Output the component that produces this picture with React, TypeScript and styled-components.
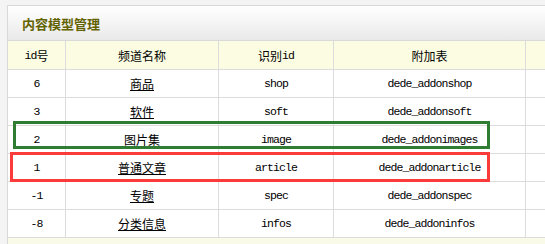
import styled, {createGlobalStyle} from 'styled-components'

const GlobalStyle = createGlobalStyle`
  html, body {
    margin: 0;
    padding: 0;
    background: #f4f4f4;
    overflow: hidden;
  }
`

type Model = {id: string; name: string; nid: string; table: string}

const models: Model[] = [
  {id: '6', name: '商品', nid: 'shop', table: 'dede_addonshop'},
  {id: '3', name: '软件', nid: 'soft', table: 'dede_addonsoft'},
  {id: '2', name: '图片集', nid: 'image', table: 'dede_addonimages'},
  {id: '1', name: '普通文章', nid: 'article', table: 'dede_addonarticle'},
  {id: '-1', name: '专题', nid: 'spec', table: 'dede_addonspec'},
  {id: '-8', name: '分类信息', nid: 'infos', table: 'dede_addoninfos'},
]

const App = () => {
  return (
    <Page>
      <GlobalStyle />
      <Panel>
        <TitleBar>
          <Title>内容模型管理</Title>
        </TitleBar>
        <Grid>
          <HeadCell><Mono>id</Mono>号</HeadCell>
          <HeadCell>频道名称</HeadCell>
          <HeadCell>识别<Mono>id</Mono></HeadCell>
          <HeadCell>附加表</HeadCell>
          <HeadCell />
          {models.map((m) => (
            <Row key={m.id}>
              <Cell mono>{m.id}</Cell>
              <Cell><NameLink href="#">{m.name}</NameLink></Cell>
              <Cell mono>{m.nid}</Cell>
              <Cell mono>{m.table}</Cell>
              <Cell />
            </Row>
          ))}
        </Grid>
        <Footer />
      </Panel>
      <Mark color="#2f7d32" x={13} y={121} w={477} h={28} />
      <Mark color="#fb3a3a" x={10} y={152} w={480} h={30} />
    </Page>
  )
}

export default App

const Page = styled.div`
  position: relative;
  width: 545px;
  height: 244px;
  padding: 5px 0 0 7px;
  box-sizing: border-box;
  overflow: hidden;
`

const Panel = styled.div`
  width: 600px;
  border: 1px solid #d9d9d9;
  background: #fff;
`

const TitleBar = styled.div`
  height: 34px;
  display: flex;
  align-items: center;
  padding-left: 14px;
  background: linear-gradient(#ffffff, #e9e9e9);
  border-bottom: 1px solid #d9d9d9;
`

const Title = styled.div`
  font-family: "Noto Sans CJK SC", sans-serif;
  font-size: 13px;
  font-weight: bold;
  color: #626200;
`

const Grid = styled.div`
  display: grid;
  grid-template-columns: 57px 152px 114px 191px 1fr;
  grid-template-rows: 28px;
  grid-auto-rows: 27px;
  gap: 1px;
  background: #dcdcdc;
  border-bottom: 1px solid #dcdcdc;
`

const Row = styled.div`
  display: contents;
`

const HeadCell = styled.div`
  background: #fbfce2;
  display: flex;
  align-items: center;
  justify-content: center;
  font-family: "Noto Sans CJK SC", sans-serif;
  font-size: 12px;
  color: #000;
`

const Cell = styled.div<{mono?: boolean}>`
  background: #fff;
  display: flex;
  align-items: center;
  justify-content: center;
  color: #000;
  font-family: ${({mono}) => (mono ? '"Liberation Mono", monospace' : '"Noto Sans CJK SC", sans-serif')};
  font-size: ${({mono}) => (mono ? '11.5px' : '12px')};
  letter-spacing: ${({mono}) => (mono ? '-0.9px' : '0')};
`

const Mono = styled.span`
  font-family: "Liberation Mono", monospace;
  font-size: 11.5px;
  letter-spacing: -0.9px;
`

const NameLink = styled.a`
  color: #000;
  text-decoration: underline;
`

const Footer = styled.div`
  height: 20px;
  background: #f9fbe8;
`

const Mark = styled.div<{color: string; x: number; y: number; w: number; h: number}>`
  position: absolute;
  left: ${({x}) => x}px;
  top: ${({y}) => y}px;
  width: ${({w}) => w}px;
  height: ${({h}) => h}px;
  box-sizing: border-box;
  border: 3px solid ${({color}) => color};
`
